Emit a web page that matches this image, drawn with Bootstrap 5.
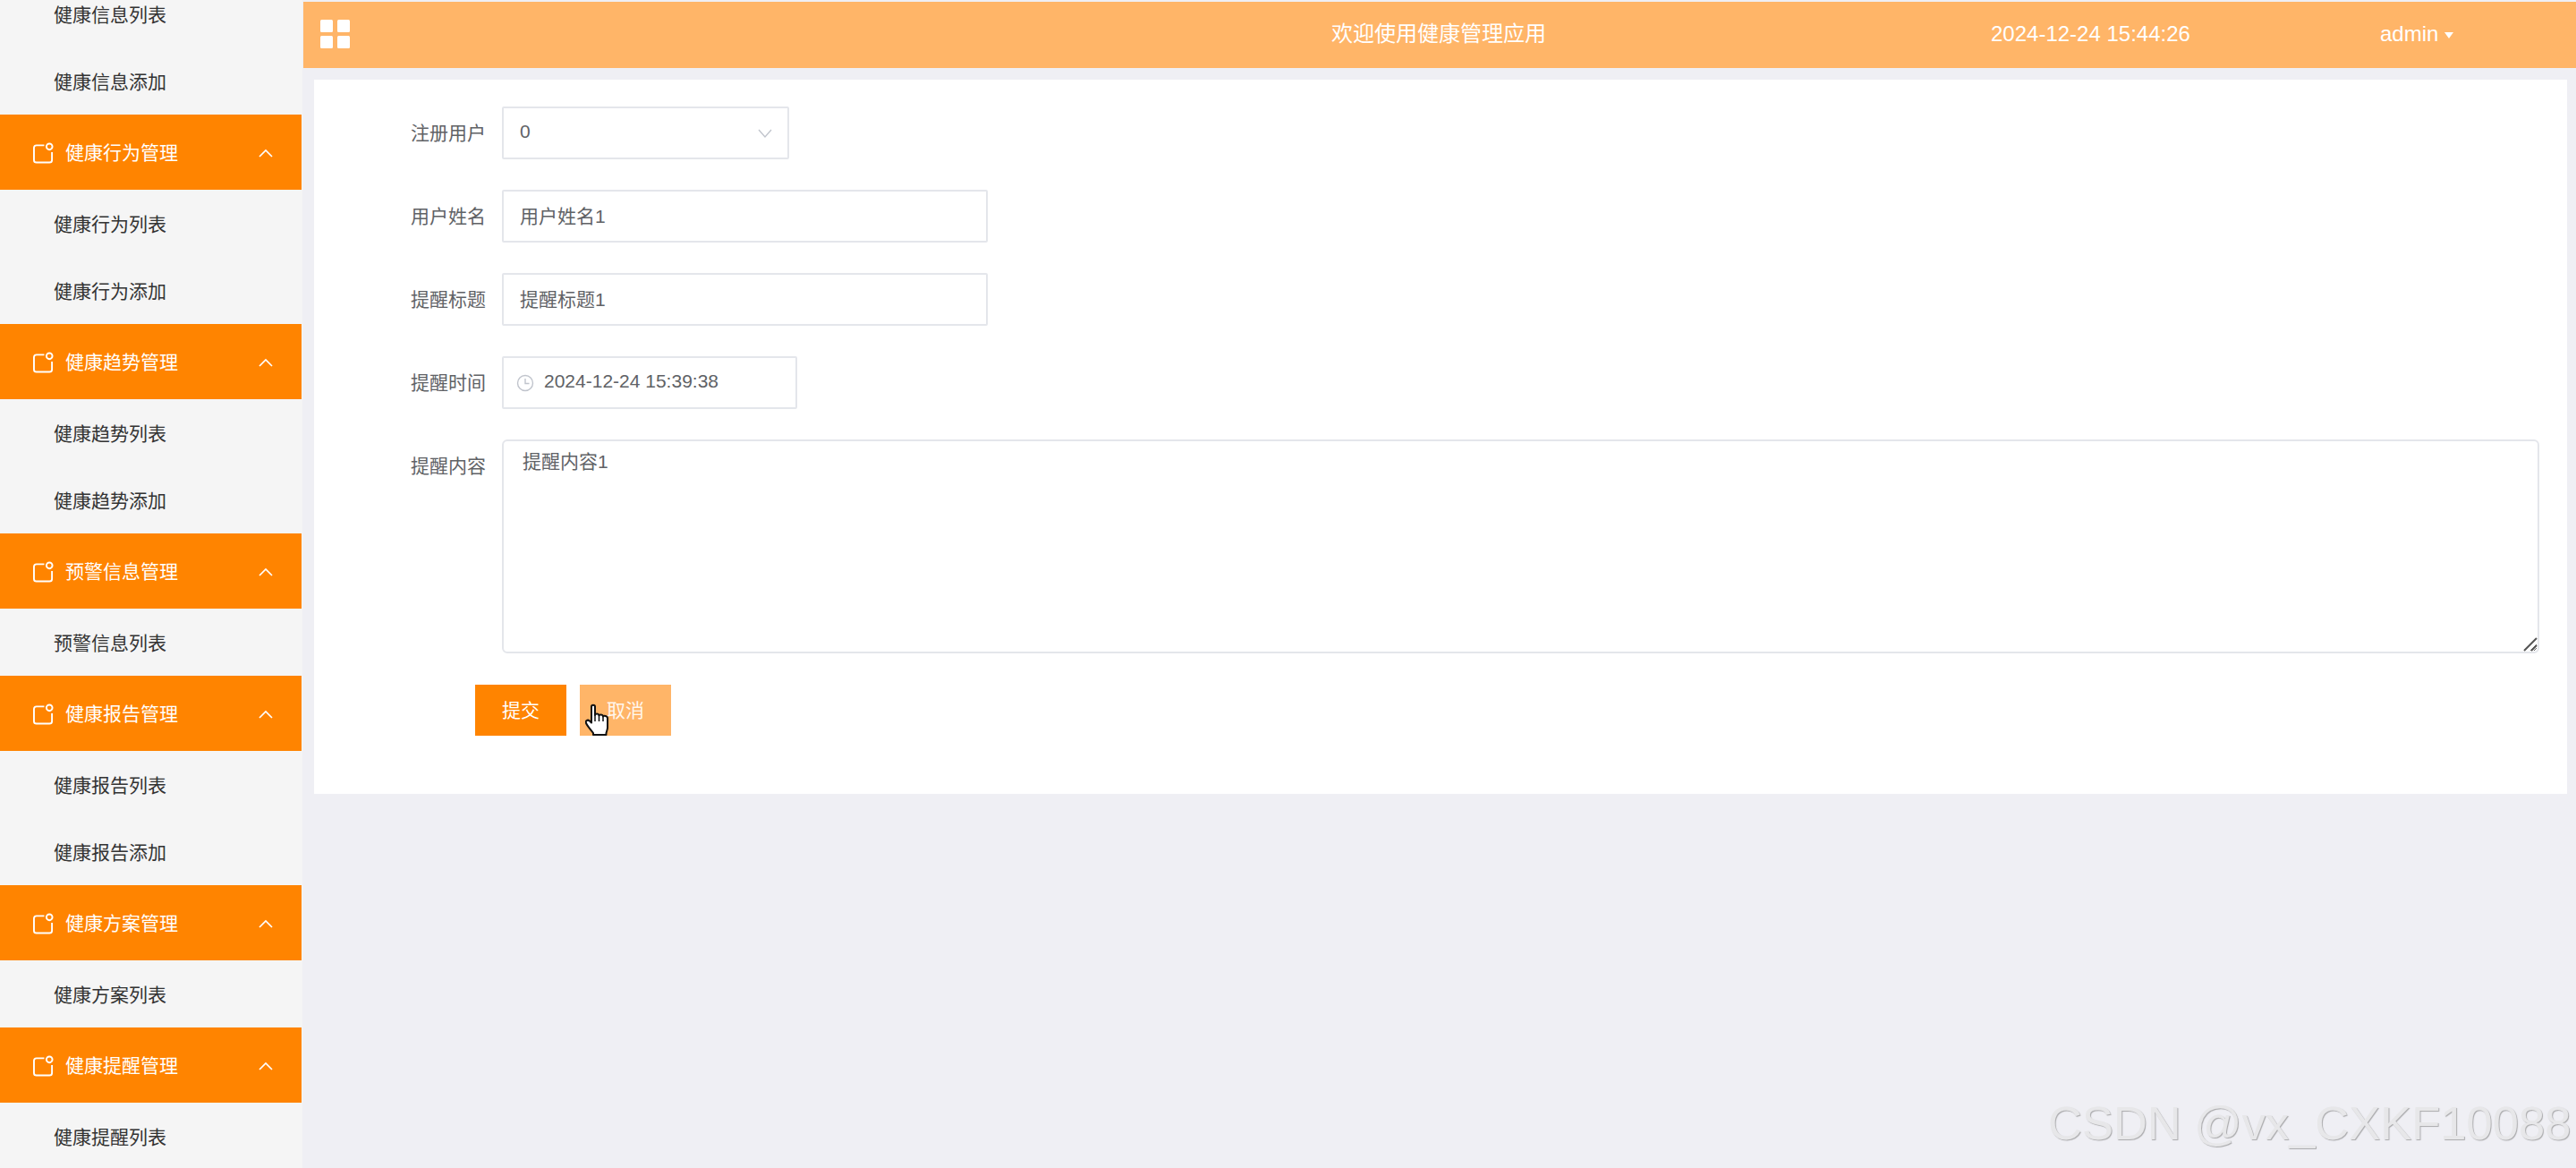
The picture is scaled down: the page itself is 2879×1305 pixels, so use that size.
<!DOCTYPE html>
<html lang="zh">
<head>
<meta charset="utf-8">
<title>健康管理应用</title>
<link rel="stylesheet" href="https://cdn.jsdelivr.net/npm/bootstrap@5.3.0/dist/css/bootstrap.min.css">
<style>
html,body{height:100%}
body{font-family:"Liberation Sans","Noto Sans CJK SC",sans-serif;font-size:21px;background:#efeff4;color:#606266;overflow:hidden;position:relative}
.shell{height:1305px}
.side{width:338px;flex:none;background:#f5f5f5;overflow:hidden}
.side-scroll{margin-top:-22px}
.side-item{height:75px;padding-left:60px;padding-top:2px;color:#333;display:flex;align-items:center;text-decoration:none}
.side-group{height:84px;background:#ff8400;color:#fff;padding:1px 32px 0 37px;margin-right:1px;display:flex;align-items:center}
.side-group .glabel{margin-left:13px;flex:1}
.main-col{padding-top:2px;min-width:0}
.top-head{height:74px;background:#ffb568;color:#fff;font-size:24px;margin-left:1px;padding:0 0 2px 19px}
.top-title{margin-left:1096px;width:737px}
.top-time{width:435px}
.caret-mark{margin-left:7px;width:0;height:0;border-left:5.5px solid transparent;border-right:5.5px solid transparent;border-top:7px solid #fff;margin-top:3px}
.panel{background:#fff;margin:13px 10px 0 13px;padding:30px 31px 65px 0}
.frow{display:flex;margin-bottom:34px}
.flabel{width:192px;margin-right:18px;margin-bottom:0;text-align:right;line-height:59px;flex:none}
.form-control.fc,.form-select.fc{height:59px;font-size:21px;color:#606266;border:2px solid #e4e6eb;border-radius:2px;padding:0 18px 3px;box-shadow:none}
.w-sel{width:321px}
.form-select.fc{background-image:url("data:image/svg+xml,%3Csvg xmlns='http://www.w3.org/2000/svg' viewBox='0 0 16 10'%3E%3Cpath d='M1 1l7 8 7-8' fill='none' stroke='%23c0c4cc' stroke-width='1.3'/%3E%3C/svg%3E");background-position:right 17px center;background-size:16px 10px}
.w-txt{width:543px}
.w-date{width:330px}
.form-control.fc.date-in{padding-left:45px}
.clock-ico{position:absolute;left:16px;top:20px}
.form-control.area{height:239px;width:2277px;font-size:21px;line-height:30px;color:#606266;border:2px solid #e4e6eb;border-radius:6px;padding:8px 21px;resize:vertical;box-shadow:none}
.resize-mark{position:absolute;right:1px;bottom:1px;pointer-events:none}
.actions{margin:35px 0 0 180px;gap:15px}
.btn.act{width:102px;height:57px;padding:0;border:0;border-radius:0;font-size:21px;color:#fff}
.act-main{background:#ff8400}
.act-soft{background:#ffb568;color:#fff7ee!important}
.hand{position:absolute;left:654px;top:786px}
.wmark{position:absolute;left:2289px;top:1225px;font-size:52.5px;line-height:60px;color:#e7e7e9;text-shadow:1px 1px 1px #a9a9ab;white-space:nowrap}
</style>
</head>
<body>
<div class="shell d-flex">
  <aside class="side">
    <div class="side-scroll">
      <a class="side-item">健康信息列表</a>
      <a class="side-item">健康信息添加</a>
      <div class="side-group"><svg width="23" height="24" viewBox="0 0 24 24" fill="none" stroke="#fff" stroke-width="2"><path d="M13 3H4A3 3 0 0 0 1 6V20A3 3 0 0 0 4 23H19A3 3 0 0 0 22 20V11"/><circle cx="19" cy="4.500" r="3.500"/></svg><span class="glabel">健康行为管理</span><svg width="16" height="10" viewBox="0 0 16 10" fill="none" stroke="#fff" stroke-width="1.700"><path d="M1 9l7-7 7 7"/></svg></div>
      <a class="side-item">健康行为列表</a>
      <a class="side-item">健康行为添加</a>
      <div class="side-group"><svg width="23" height="24" viewBox="0 0 24 24" fill="none" stroke="#fff" stroke-width="2"><path d="M13 3H4A3 3 0 0 0 1 6V20A3 3 0 0 0 4 23H19A3 3 0 0 0 22 20V11"/><circle cx="19" cy="4.500" r="3.500"/></svg><span class="glabel">健康趋势管理</span><svg width="16" height="10" viewBox="0 0 16 10" fill="none" stroke="#fff" stroke-width="1.700"><path d="M1 9l7-7 7 7"/></svg></div>
      <a class="side-item">健康趋势列表</a>
      <a class="side-item">健康趋势添加</a>
      <div class="side-group"><svg width="23" height="24" viewBox="0 0 24 24" fill="none" stroke="#fff" stroke-width="2"><path d="M13 3H4A3 3 0 0 0 1 6V20A3 3 0 0 0 4 23H19A3 3 0 0 0 22 20V11"/><circle cx="19" cy="4.500" r="3.500"/></svg><span class="glabel">预警信息管理</span><svg width="16" height="10" viewBox="0 0 16 10" fill="none" stroke="#fff" stroke-width="1.700"><path d="M1 9l7-7 7 7"/></svg></div>
      <a class="side-item">预警信息列表</a>
      <div class="side-group"><svg width="23" height="24" viewBox="0 0 24 24" fill="none" stroke="#fff" stroke-width="2"><path d="M13 3H4A3 3 0 0 0 1 6V20A3 3 0 0 0 4 23H19A3 3 0 0 0 22 20V11"/><circle cx="19" cy="4.500" r="3.500"/></svg><span class="glabel">健康报告管理</span><svg width="16" height="10" viewBox="0 0 16 10" fill="none" stroke="#fff" stroke-width="1.700"><path d="M1 9l7-7 7 7"/></svg></div>
      <a class="side-item">健康报告列表</a>
      <a class="side-item">健康报告添加</a>
      <div class="side-group"><svg width="23" height="24" viewBox="0 0 24 24" fill="none" stroke="#fff" stroke-width="2"><path d="M13 3H4A3 3 0 0 0 1 6V20A3 3 0 0 0 4 23H19A3 3 0 0 0 22 20V11"/><circle cx="19" cy="4.500" r="3.500"/></svg><span class="glabel">健康方案管理</span><svg width="16" height="10" viewBox="0 0 16 10" fill="none" stroke="#fff" stroke-width="1.700"><path d="M1 9l7-7 7 7"/></svg></div>
      <a class="side-item">健康方案列表</a>
      <div class="side-group"><svg width="23" height="24" viewBox="0 0 24 24" fill="none" stroke="#fff" stroke-width="2"><path d="M13 3H4A3 3 0 0 0 1 6V20A3 3 0 0 0 4 23H19A3 3 0 0 0 22 20V11"/><circle cx="19" cy="4.500" r="3.500"/></svg><span class="glabel">健康提醒管理</span><svg width="16" height="10" viewBox="0 0 16 10" fill="none" stroke="#fff" stroke-width="1.700"><path d="M1 9l7-7 7 7"/></svg></div>
      <a class="side-item">健康提醒列表</a>
    </div>
  </aside>
  <div class="main-col flex-grow-1">
    <header class="top-head d-flex align-items-center">
      <svg width="34" height="32" viewBox="0 0 34 32" fill="#fff"><rect x="0" y="0" width="14" height="14" rx="1.500"/><rect x="19" y="0" width="14" height="14" rx="1.500"/><rect x="0" y="18" width="14" height="14" rx="1.500"/><rect x="19" y="18" width="14" height="14" rx="1.500"/></svg>
      <div class="top-title">欢迎使用健康管理应用</div>
      <div class="top-time">2024-12-24 15:44:26</div>
      <div class="d-flex align-items-center">admin<span class="caret-mark"></span></div>
    </header>
    <main class="panel">
      <form>
        <div class="frow">
          <label class="flabel">注册用户</label>
          <select class="form-select fc w-sel"><option>0</option></select>
        </div>
        <div class="frow">
          <label class="flabel">用户姓名</label>
          <input class="form-control fc w-txt" value="用户姓名1">
        </div>
        <div class="frow">
          <label class="flabel">提醒标题</label>
          <input class="form-control fc w-txt" value="提醒标题1">
        </div>
        <div class="frow">
          <label class="flabel">提醒时间</label>
          <div class="position-relative">
            <input class="form-control fc w-date date-in" value="2024-12-24 15:39:38">
            <svg class="clock-ico" width="20" height="20" viewBox="0 0 20 20" fill="none" stroke="#c0c4cc" stroke-width="1.400"><circle cx="10" cy="10" r="8.500"/><path d="M10 5v5.500h4.500"/></svg>
          </div>
        </div>
        <div class="frow mb-0">
          <label class="flabel">提醒内容</label>
          <div class="position-relative">
            <textarea class="form-control area">提醒内容1</textarea>
            <svg class="resize-mark" width="18" height="18" viewBox="0 0 18 18" stroke="#555" stroke-width="2" fill="none"><path d="M2 16L16 2M10 16l6-6"/></svg>
          </div>
        </div>
        <div class="actions d-flex">
          <button type="button" class="btn act act-main">提交</button>
          <button type="button" class="btn act act-soft">取消</button>
        </div>
      </form>
    </main>
  </div>
</div>
<svg class="hand" width="28" height="36" viewBox="0 0 28 36"><path d="M7 3.500C7 1 11 1 11 3.500V13C11.500 11 15 11 15.500 13.500C16 12 19.500 12 20 14.500C20.500 13.500 25 13.500 25 16.500V27C25 29 24 31 23.500 33V35H9V33C7 30 3 26 1 22C0 19.500 2.500 17.500 5 19.500L7 21.500Z" fill="#fff" stroke="#111" stroke-width="2" stroke-linejoin="round"/><path d="M11 13v7M15.500 13.500V20M20 14.500V20" stroke="#111" stroke-width="1.500" fill="none"/></svg>
<div class="wmark">CSDN @vx_CXKF10088</div>
<script src="https://cdn.jsdelivr.net/npm/bootstrap@5.3.0/dist/js/bootstrap.bundle.min.js"></script>
</body>
</html>
